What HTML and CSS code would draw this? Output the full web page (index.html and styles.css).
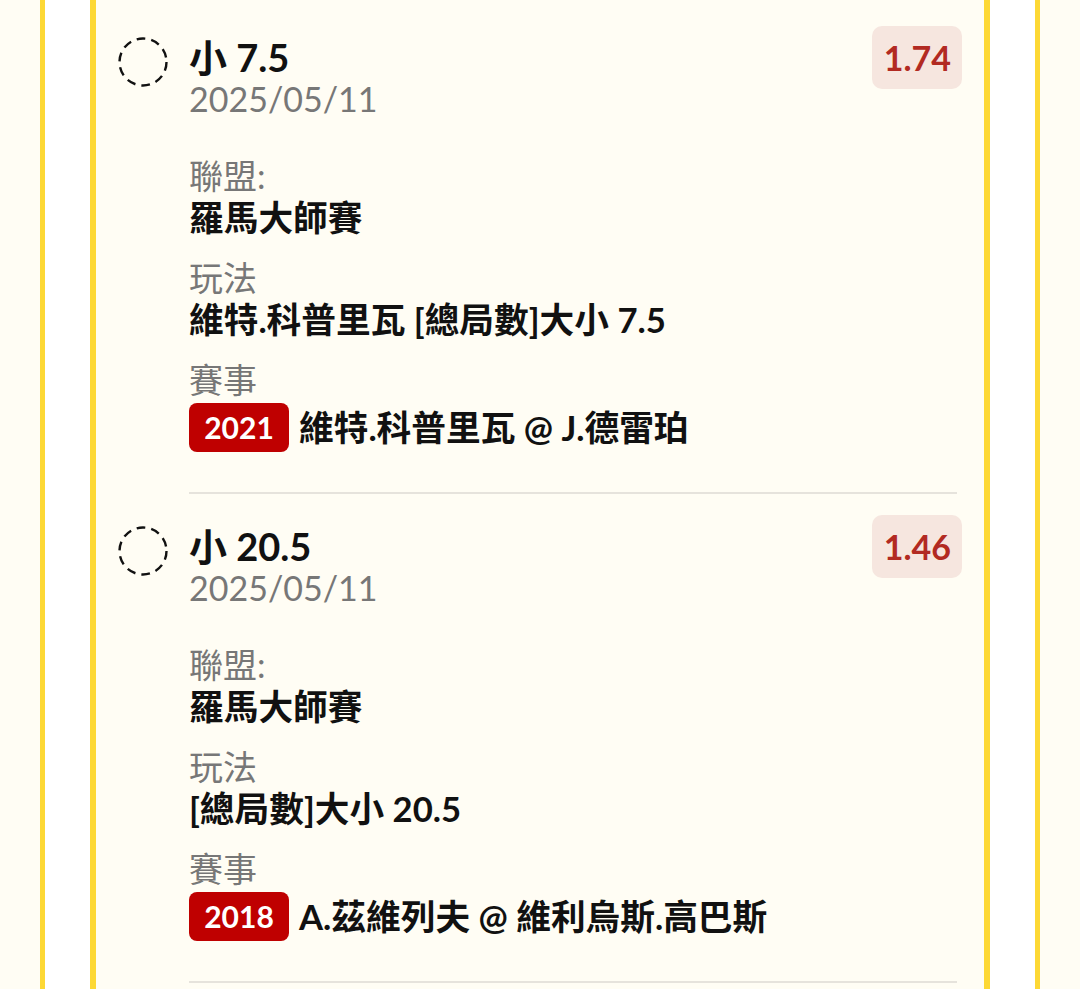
FILE: index.html
```html
<!DOCTYPE html>
<html lang="zh-Hant">
<head>
<meta charset="UTF-8">
<meta name="viewport" content="width=device-width, initial-scale=1.0">
<title>注單</title>
<link rel="stylesheet" href="styles.css">
</head>
<body>
<div class="frame">
    <div class="slip">
        <div class="bet">
            <svg class="check" viewBox="0 0 50 50"><circle cx="25" cy="25" r="23.5"/></svg>
            <div class="bet-body">
                <div class="bet-head">
                    <div class="bet-title">小 7.5</div>
                    <div class="odds">1.74</div>
                </div>
                <div class="bet-date">2025/05/11</div>
                <div class="field">
                    <div class="field-label">聯盟:</div>
                    <div class="field-value">羅馬大師賽</div>
                </div>
                <div class="field">
                    <div class="field-label">玩法</div>
                    <div class="field-value">維特.科普里瓦 [總局數]大小 7.5</div>
                </div>
                <div class="field">
                    <div class="field-label">賽事</div>
                    <div class="match">
                        <span class="year">2021</span>
                        <span class="field-value">維特.科普里瓦 @ J.德雷珀</span>
                    </div>
                </div>
            </div>
        </div>
        <div class="bet">
            <svg class="check" viewBox="0 0 50 50"><circle cx="25" cy="25" r="23.5"/></svg>
            <div class="bet-body">
                <div class="bet-head">
                    <div class="bet-title">小 20.5</div>
                    <div class="odds">1.46</div>
                </div>
                <div class="bet-date">2025/05/11</div>
                <div class="field">
                    <div class="field-label">聯盟:</div>
                    <div class="field-value">羅馬大師賽</div>
                </div>
                <div class="field">
                    <div class="field-label">玩法</div>
                    <div class="field-value">[總局數]大小 20.5</div>
                </div>
                <div class="field">
                    <div class="field-label">賽事</div>
                    <div class="match">
                        <span class="year">2018</span>
                        <span class="field-value">A.茲維列夫 @ 維利烏斯.高巴斯</span>
                    </div>
                </div>
            </div>
        </div>
    </div>
</div>
</body>
</html>
```

FILE: styles.css
```css
body {
    font-family: Lato, "Noto Sans CJK TC", sans-serif;
    background-color: #fffdf4;
    margin: 0;
    padding: 0;
    color: #111;
}
.frame {
    margin: 0 40px;
    min-height: 989px;
    background-color: #fff;
    border-left: 5px solid #fdd835;
    border-right: 5px solid #fdd835;
    padding: 0 45px;
}
.slip {
    min-height: 989px;
    background-color: #fffdf4;
    border-left: 6px solid #fdd835;
    border-right: 6px solid #fdd835;
    padding: 36px 22px 0;
}
.bet {
    display: flex;
    gap: 21px;
}
.check {
    flex: none;
    width: 50px;
    height: 50px;
    margin-top: 1px;
}
.check circle {
    fill: none;
    stroke: #111;
    stroke-width: 2.4;
    stroke-dasharray: 8.8 6;
}
.bet-body {
    flex: 1;
    padding-bottom: 40px;
    border-bottom: 2px solid #e6e3dc;
    margin-right: 5px;
}
.bet + .bet .bet-body {
    padding-top: 31px;
}
.bet + .bet .check {
    margin-top: 32px;
}
.bet-head {
    display: flex;
    justify-content: space-between;
    align-items: center;
    height: 42px;
}
.bet-title {
    font-size: 38px;
    font-weight: bold;
    line-height: 42px;
}
.odds {
    margin-right: -5px;
    padding: 0 11px 0 12px;
    height: 63px;
    line-height: 63px;
    border-radius: 10px;
    background-color: #f6e6df;
    color: #b22a22;
    font-size: 34px;
    font-weight: bold;
}
.bet-date {
    font-size: 34px;
    line-height: 42px;
    color: #777;
    margin-bottom: 35px;
}
.field {
    margin-bottom: 18px;
}
.field:last-child {
    margin-bottom: 0;
}
.field-label {
    font-size: 34px;
    line-height: 42px;
    color: #777;
}
.field-value {
    font-size: 34.7px;
    line-height: 42px;
    font-weight: bold;
}
.match {
    display: flex;
    align-items: center;
    gap: 10px;
    margin-top: 2px;
}
.year {
    width: 100px;
    height: 49px;
    line-height: 49px;
    text-align: center;
    border-radius: 8px;
    background-color: #bf0000;
    color: #fff;
    font-size: 30px;
    font-weight: bold;
}
```
